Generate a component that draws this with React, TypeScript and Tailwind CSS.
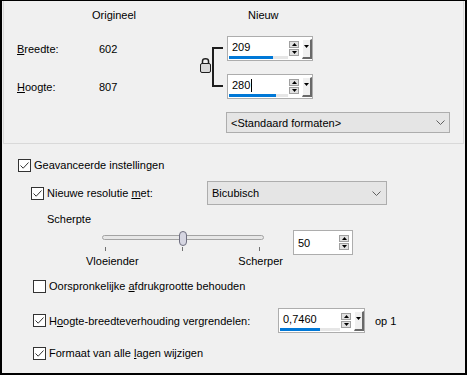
import React from "react";

function Check({ checked }: { checked: boolean }) {
  return (
    <span className="w-[13px] h-[13px] border border-[#333333] bg-white flex items-center justify-center shrink-0">
      {checked && (
        <svg width="11" height="11" viewBox="0 0 11 11">
          <path d="M1.5 5.5 L4.2 8.2 L9.5 2.5" fill="none" stroke="#333333" strokeWidth="1" />
        </svg>
      )}
    </span>
  );
}

function Tri({ up }: { up: boolean }) {
  return (
    <svg width="5" height="3" viewBox="0 0 5 3">
      <path d={up ? "M2.5 0 L5 3 L0 3Z" : "M0 0 L5 0 L2.5 3Z"} fill="#000" />
    </svg>
  );
}

function UpDown() {
  return (
    <div className="flex flex-col gap-[1px]">
      <div className="w-[10px] h-[7px] bg-[#e1e1e1] border border-[#a0a0a0] flex items-center justify-center">
        <Tri up={true} />
      </div>
      <div className="w-[10px] h-[7px] bg-[#e1e1e1] border border-[#a0a0a0] flex items-center justify-center">
        <Tri up={false} />
      </div>
    </div>
  );
}

function DropBtn() {
  return (
    <div className="w-[10px] h-[20px] bg-[#f0f0f0] border-l border-t border-l-white border-t-white border-r-2 border-b-2 border-r-[#696969] border-b-[#696969] flex justify-center pt-[5px]">
      <Tri up={false} />
    </div>
  );
}

function Spin({
  value,
  bar,
  cursor,
  w,
  textW,
}: {
  value: string;
  bar: number;
  cursor?: boolean;
  w: string;
  textW: string;
}) {
  return (
    <div className={`${w} h-[25px] border border-[#adadad] bg-white flex items-center`}>
      <div className={`${textW} h-full flex flex-col pl-[1px]`}>
        <div className="flex items-center h-[18px] pl-[3px] pt-[2px]">
          <span>{value}</span>
          {cursor && <span className="w-[1px] h-[13px] bg-black ml-[1px]" />}
        </div>
        <div className="h-[3px] mt-[1px] bg-[#e6e6e6] w-full">
          <div className="h-full bg-[#0078d7]" style={{ width: `${bar}px` }} />
        </div>
      </div>
      <div className="ml-[1px]">
        <UpDown />
      </div>
      <div className="ml-[3px]">
        <DropBtn />
      </div>
    </div>
  );
}

function Chevron() {
  return (
    <svg width="9" height="5" viewBox="0 0 9 5">
      <path d="M0.5 0.5 L4.5 4.5 L8.5 0.5" fill="none" stroke="#606060" strokeWidth="1" />
    </svg>
  );
}

export default function App() {
  return (
    <div className="w-[467px] h-[375px] bg-[#f0f0f0] border-t border-l-2 border-r-2 border-b-2 border-black font-['Liberation_Sans',Arial,sans-serif] text-[11px] text-black leading-[16px] overflow-hidden">
      {/* Top panel */}
      <div className="mx-[1px] h-[143px] border-x border-b border-[#d9d9d9] flex flex-col">
        <div className="flex h-[16px] mt-[6px]">
          <div className="ml-[88px] w-[156px]">Origineel</div>
          <div>Nieuw</div>
        </div>
        <div className="flex mt-[13px]">
          <div className="ml-[13px] w-[82px] flex flex-col gap-[13px]">
            <div className="h-[25px] flex items-center">
              <span>
                <u>B</u>reedte:
              </span>
            </div>
            <div className="h-[25px] flex items-center">
              <span>
                <u>H</u>oogte:
              </span>
            </div>
          </div>
          <div className="w-[98px] flex flex-col gap-[13px]">
            <div className="h-[25px] flex items-center">602</div>
            <div className="h-[25px] flex items-center">807</div>
          </div>
          <svg width="28" height="63" viewBox="0 0 28 63" className="shrink-0">
            <path d="M26 12 H16 V50 H26" fill="none" stroke="#1e1e1e" strokeWidth="2" />
            <path d="M5.5 27.5 V25 A3 2.2 0 0 1 11.5 25 V27.5" fill="none" stroke="#1e1e1e" strokeWidth="1.5" />
            <rect x="3.5" y="27.5" width="10" height="9" rx="1.5" fill="#d9d9d9" stroke="#1e1e1e" strokeWidth="1" />
          </svg>
          <div className="ml-[2px] flex flex-col gap-[13px]">
            <Spin value="209" bar={44} w="w-[86px]" textW="w-[61px]" />
            <Spin value="280" bar={47} cursor w="w-[86px]" textW="w-[61px]" />
          </div>
        </div>
        <div className="ml-[222px] mt-[13px] w-[224px] h-[21px] bg-[#e5e5e5] border border-[#adadad] flex items-center justify-between pl-[4px] pr-[4px]">
          <span>&lt;Standaard formaten&gt;</span>
          <Chevron />
        </div>
      </div>

      {/* Row 1 */}
      <div className="flex items-center h-[16px] mt-[13px] ml-[16px]">
        <Check checked />
        <span className="ml-[3px]">Geavanceerde instellingen</span>
      </div>

      {/* Row 2 */}
      <div className="flex items-center h-[24px] mt-[8px] ml-[29px]">
        <div className="w-[176px] flex items-center">
          <Check checked />
          <span className="ml-[3px]">
            Nieuwe resolutie <u>m</u>et:
          </span>
        </div>
        <div className="w-[180px] h-[24px] bg-[#e5e5e5] border border-[#adadad] flex items-center justify-between pl-[4px] pr-[5px]">
          <span>Bicubisch</span>
          <Chevron />
        </div>
      </div>

      {/* Scherpte */}
      <div className="h-[16px] mt-[6px] ml-[45px]">Scherpte</div>

      {/* Slider row */}
      <div className="flex items-start mt-[3px]">
        <div className="ml-[84px] mt-[1px] w-[197px] flex flex-col">
          <div className="relative h-[15px]">
            <div className="absolute left-[16px] top-[4px] w-[162px] h-[5px] rounded-full bg-[#e7e7e7] border border-[#a3a3a3]" />
            <div className="absolute left-[93px] top-0 w-[8px] h-[15px] rounded-full bg-[#d6d6e2] border border-[#6f6f80]" />
          </div>
          <div className="flex h-[4px] mt-[1px] ml-[19px] gap-[76px]">
            <div className="w-[1px] h-full bg-[#707070]" />
            <div className="w-[1px] h-full bg-[#707070]" />
            <div className="w-[1px] h-full bg-[#707070]" />
          </div>
          <div className="flex justify-between h-[14px] leading-[14px] mt-[3px]">
            <span>Vloeiender</span>
            <span>Scherper</span>
          </div>
        </div>
        <div className="ml-[10px] w-[60px] h-[25px] border border-[#adadad] bg-white flex items-center justify-between pl-[4px] pr-[3px]">
          <span>50</span>
          <UpDown />
        </div>
      </div>

      {/* Row 3 */}
      <div className="flex items-center h-[16px] mt-[10px] ml-[31px]">
        <Check checked={false} />
        <span className="ml-[3px]">
          Oorspronkelijke <u>a</u>fdrukgrootte behouden
        </span>
      </div>

      {/* Row 4 */}
      <div className="flex items-center h-[25px] mt-[14px] ml-[31px]">
        <div className="w-[245px] flex items-center">
          <Check checked />
          <span className="ml-[3px]">
            H<u>o</u>ogte-breedteverhouding vergrendelen:
          </span>
        </div>
        <Spin value="0,7460" bar={40} w="w-[87px]" textW="w-[61px]" />
        <span className="ml-[10px]">op 1</span>
      </div>

      {/* Row 5 */}
      <div className="flex items-center h-[16px] mt-[12px] ml-[31px]">
        <Check checked />
        <span className="ml-[3px]">
          Formaat van alle <u>l</u>agen wijzigen
        </span>
      </div>
    </div>
  );
}
